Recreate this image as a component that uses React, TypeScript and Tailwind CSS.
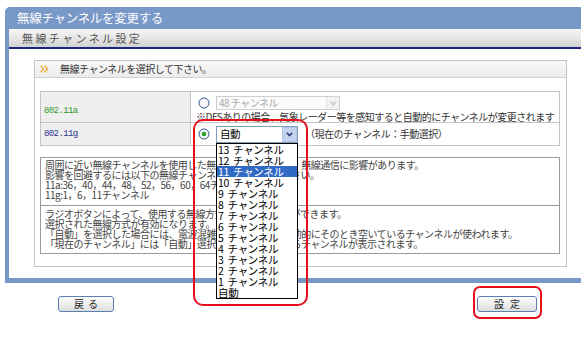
import React from "react";

const channels = ["13", "12", "11", "10", "9", "8", "7", "6", "5", "4", "3", "2", "1"];

function Radio({ checked }: { checked?: boolean }) {
  return (
    <svg width="12" height="12" viewBox="0 0 12 12" className="shrink-0">
      <circle cx="6" cy="6" r="5" fill="#f8f8f8" stroke="#33598c" strokeWidth="1" />
      {checked && <circle cx="6" cy="6" r="2.3" fill="#2aa52a" />}
    </svg>
  );
}

function Chevron({ color }: { color: string }) {
  return (
    <svg width="7" height="5" viewBox="0 0 7 5">
      <polyline points="0.8,0.8 3.5,3.6 6.2,0.8" fill="none" stroke={color} strokeWidth="1.6" />
    </svg>
  );
}

export default function App() {
  return (
    <div className="w-[581px] h-[338px] overflow-hidden bg-white relative font-['Noto_Sans_CJK_JP',sans-serif] text-[10px] leading-[10px] tracking-[-0.5px]">
      <div className="pt-[7px] pl-[5px]">
        <div className="w-[600px] bg-[#7898c8] rounded-tl-[5px] pl-[4px] pb-[5px]">
          {/* title */}
          <div className="h-[22px] flex items-center pl-[8px] text-white text-[12.5px] leading-none tracking-[-0.3px]">
            無線チャンネルを変更する
          </div>
          <div className="bg-white">
            <div className="h-[20px] bg-gradient-to-b from-[#f7f7f7] via-[#e6e6e6] to-[#d2d2d2] border-b-2 border-[#1d2580] flex items-center pl-[13px] text-[11px] leading-none tracking-[2.4px] text-[#555]">
              無線チャンネル設定
            </div>
            <div className="pt-[11px] pl-[25px] pb-[11px]">
              {/* panel */}
              <div className="w-[533px] border border-[#c4c4c4] bg-white">
                <div className="h-[17px] bg-gradient-to-b from-[#f8f8f8] to-[#ececec] border-b border-[#d0d0d0] flex items-center pl-[5px] gap-[11px] text-[#333]">
                  <svg width="9" height="8" viewBox="0 0 9 8">
                    <polyline points="0.8,0.8 3.6,4 0.8,7.2" fill="none" stroke="#f29a1c" strokeWidth="1.7" strokeDasharray="1.6 0.8" />
                    <polyline points="4.8,0.8 7.6,4 4.8,7.2" fill="none" stroke="#f29a1c" strokeWidth="1.7" strokeDasharray="1.6 0.8" />
                  </svg>
                  <span>無線チャンネルを選択して下さい。</span>
                </div>
                <div className="pt-[13px] pl-[5px] pr-[6px] pb-[12px]">
                  {/* table */}
                  <div className="w-[520px] border border-[#c4c4c4] grid grid-cols-[150px_1fr]">
                    <div className="h-[31px] bg-[#efefef] border-r border-b border-[#c4c4c4] flex items-center pl-[3px] pt-[7px] font-['Liberation_Mono',monospace] text-[9px] tracking-[-0.6px] text-[#2e9a2e]">
                      802.11a
                    </div>
                    <div className="h-[31px] border-b border-[#c4c4c4] pl-[5px] pt-[4px]">
                      <div className="flex items-center gap-[6px] pl-[2px]">
                        <Radio />
                        <div className="w-[124px] h-[14px] border border-[#cfcfcf] bg-[#fbfbfb] flex items-center justify-between pl-[2px] text-[#a8a8a8]">
                          <span>48 チャンネル</span>
                          <div className="w-[13px] h-[12px] border-l border-[#e2e2e2] bg-[#f2f2f2] flex items-center justify-center">
                            <Chevron color="#c8c8c8" />
                          </div>
                        </div>
                      </div>
                      <div className="mt-[2px] text-[#333] whitespace-nowrap">
                        ※DFSありの場合、気象レーダー等を感知すると自動的にチャンネルが変更されます
                      </div>
                    </div>
                    <div className="h-[22px] bg-[#efefef] border-r border-[#c4c4c4] flex items-center pl-[3px] font-['Liberation_Mono',monospace] text-[9px] tracking-[-0.6px] text-[#2b2f8f]">
                      802.11g
                    </div>
                    <div className="h-[22px] pl-[7px] flex items-center gap-[6px] text-[#333]">
                      <Radio checked />
                      <div className="relative">
                        <div className="w-[82px] h-[17px] border border-[#7f9db9] bg-white flex items-center justify-between pl-[3px] text-black text-[10.5px]">
                          <span>自動</span>
                          <div className="w-[15px] h-[15px] bg-[#c3d3f0] border border-[#b0c4e8] flex items-center justify-center">
                            <Chevron color="#253f7a" />
                          </div>
                        </div>
                        {/* open list */}
                        <div className="absolute left-0 top-[17px] w-[82px] z-10 border border-black bg-white text-black text-[10.5px] tracking-[-0.3px]">
                          {channels.map((c) => (
                            <div
                              key={c}
                              className={
                                "h-[11px] leading-[11px] pl-[1px] whitespace-nowrap flex " +
                                (c === "11" ? "bg-[#316ac5] text-white" : "")
                              }
                            >
                              <span>{c}</span>
                              <span className="ml-[4px]">チャンネル</span>
                            </div>
                          ))}
                          <div className="h-[11px] leading-[11px] pl-[1px]">自動</div>
                        </div>
                        <div className="absolute left-[-23px] top-[-7px] w-[115px] h-[187px] border-2 border-[#e5101c] rounded-[10px] z-20 pointer-events-none" />
                      </div>
                      <span className="pl-[1px]">（現在のチャンネル：手動選択）</span>
                    </div>
                  </div>
                  {/* notes */}
                  <div className="mt-[11px] w-[520px] border border-[#9a9a9a] text-[#444]">
                    <div className="h-[48px] pt-[2px] pl-[4px] border-b border-[#9a9a9a] whitespace-nowrap">
                      <div>周囲に近い無線チャンネルを使用した無線機器がある場合、無線通信に影響があります。</div>
                      <div>影響を回避するには以下の無線チャンネルを使用してください。</div>
                      <div>11a:36，40，44，48，52，56，60，64チャンネル</div>
                      <div>11g:1，6，11チャンネル</div>
                    </div>
                    <div className="h-[47px] pt-[3px] pl-[4px] whitespace-nowrap">
                      <div>ラジオボタンによって、使用する無線方式を選択することができます。</div>
                      <div>選択された無線方式が有効になります。</div>
                      <div>「自動」を選択した場合には、電波混雑状況を検知して自動的にそのとき空いているチャンネルが使われます。</div>
                      <div>「現在のチャンネル」には「自動」選択時に使用されているチャンネルが表示されます。</div>
                    </div>
                  </div>
                </div>
              </div>
            </div>
          </div>
        </div>
      </div>
      {/* buttons */}
      <div className="flex justify-between items-center pl-[58px] pr-[44px] pt-[13px]">
        <button className="w-[56px] h-[16px] border border-[#5b7fb0] rounded-[3px] bg-gradient-to-b from-white to-[#dedede] text-[10px] leading-none tracking-[4px] text-[#222] pl-[4px]">
          戻る
        </button>
        <div className="relative">
          <button className="w-[60px] h-[16px] border border-[#5b7fb0] rounded-[3px] bg-gradient-to-b from-white to-[#dedede] text-[10px] leading-none tracking-[6px] text-[#222] pl-[6px]">
            設定
          </button>
          <div className="absolute left-[-4px] top-[-10px] w-[69px] h-[33px] border-2 border-[#e5101c] rounded-[7px] pointer-events-none" />
        </div>
      </div>
    </div>
  );
}
